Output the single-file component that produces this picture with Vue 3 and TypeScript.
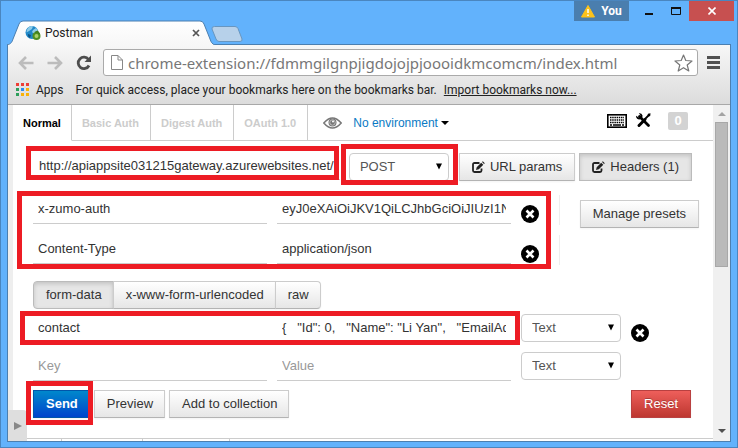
<script setup lang="ts">
import { ref } from 'vue'

interface Pair { key: string; value: string }
interface FormPair extends Pair { type: string; removable: boolean; marked: boolean }

const authTabs: string[] = ['Normal', 'Basic Auth', 'Digest Auth', 'OAuth 1.0']
const activeAuth = ref('Normal')
const address = ref('chrome-extension://fdmmgilgnpjigdojojpjoooidkmcomcm/index.html')
const url = ref('http://apiappsite031215gateway.azurewebsites.net/')
const method = ref('POST')
const headers = ref<Pair[]>([
  { key: 'x-zumo-auth', value: 'eyJ0eXAiOiJKV1QiLCJhbGciOiJIUzI1NiJ9' },
  { key: 'Content-Type', value: 'application/json' },
])
const bodyModes: string[] = ['form-data', 'x-www-form-urlencoded', 'raw']
const bodyMode = ref('form-data')
const formRows = ref<FormPair[]>([
  { key: 'contact', value: '{   "Id": 0,   "Name": "Li Yan",   "EmailAddress"', type: 'Text', removable: true, marked: true },
  { key: '', value: '', type: 'Text', removable: false, marked: false },
])
const appDots: string[] = ['#ee3e36', '#ee3e36', '#ee3e36', '#2e9e5b', '#2b8cf0', '#f9b208', '#2e9e5b', '#f9b208', '#f9b208']
</script>

<template>
  <div class="window">
    <header class="titlebar">
      <div class="tab">
        <svg class="tab-shape" viewBox="0 0 208 25" preserveAspectRatio="none" aria-hidden="true">
          <defs>
            <linearGradient id="tabFill" x1="0" y1="0" x2="0" y2="1">
              <stop offset="0" stop-color="#fff" /><stop offset="1" stop-color="#f7f7f7" />
            </linearGradient>
          </defs>
          <path d="M0 25C4 24 5 22 6 19L12 4Q13 1 16 1H193Q196 1 197 4L203 19C204 22 205 24 208 25Z" fill="url(#tabFill)" />
          <path d="M0 25C4 24 5 22 6 19L12 4Q13 1 16 1H193Q196 1 197 4L203 19C204 22 205 24 208 25" fill="none" stroke="#4b7fb0" />
        </svg>
        <svg class="favicon" viewBox="0 0 16 16" aria-hidden="true">
          <circle cx="7" cy="7.500" r="6.500" fill="#2088c8" />
          <path d="M3 3Q5 .5 8 1.300L7 4 4 6 1.500 7.500Q1.200 5 3 3ZM8 5l3-2 2 2-1 3-3 1-2-2Z" fill="#8ccbe8" />
          <path d="M3 9l3 1-1 3Q2.500 12 3 9Z" fill="#0c5688" />
          <circle cx="11.500" cy="11" r="3" fill="#a9d16a" stroke="#4f8f22" stroke-width="2" />
          <path d="M10 7.500L12.500 6.500 14.500 9" fill="none" stroke="#3f7d1c" stroke-width="1.500" />
        </svg>
        <span class="tab-title">Postman</span>
        <button class="bare tab-close" aria-label="Close tab">
          <svg width="8" height="8" viewBox="0 0 8 8"><path d="M1 1l6 6M7 1L1 7" stroke="#555" stroke-width="1.700" /></svg>
        </button>
      </div>
      <button class="bare new-tab" aria-label="New tab">
        <svg width="32" height="16" viewBox="0 0 32 16"><path d="M3.500 .5H24Q26 .5 27 2.500L31 13Q31.500 15.500 29 15.500H8Q6 15.500 5 13L1 3Q.5 .5 3.500 .5Z" fill="#b7d1ea" stroke="#6896c0" /></svg>
      </button>
      <div class="controls">
        <button class="bare user">
          <svg width="14" height="13" viewBox="0 0 14 13"><path d="M7 .5L13.500 12H.5Z" fill="#fcc21b" stroke="#fcc21b" stroke-linejoin="round" /><path d="M7 4v4M7 9.500v1.500" stroke="#fff" stroke-width="1.500" /></svg>
          <span>You</span>
        </button>
        <button class="bare win" aria-label="Minimize"><svg width="8" height="9" viewBox="0 0 8 9"><path d="M0 7h8" stroke="#111" stroke-width="2" /></svg></button>
        <button class="bare win" aria-label="Maximize"><svg width="10" height="8" viewBox="0 0 10 8"><path d="M.5 1v6.500h9V1" fill="none" stroke="#111" /><path d="M0 1h10" stroke="#111" stroke-width="2" /></svg></button>
        <button class="bare win close" aria-label="Close"><svg width="8" height="8" viewBox="0 0 8 8"><path d="M.5 .5l7 7M7.500 .5l-7 7" stroke="#fff" stroke-width="1.600" /></svg></button>
      </div>
    </header>

    <div class="frame">
      <div class="chrome">
        <div class="toolbar">
          <button class="bare" aria-label="Back"><svg width="16" height="14" viewBox="0 0 16 14"><path d="M8 1L2 7l6 6M2 7h13.500" fill="none" stroke="#bcbcbc" stroke-width="2.600" /></svg></button>
          <button class="bare" aria-label="Forward"><svg width="16" height="14" viewBox="0 0 16 14"><path d="M8 1l6 6-6 6M14 7H.5" fill="none" stroke="#bcbcbc" stroke-width="2.600" /></svg></button>
          <button class="bare" aria-label="Reload"><svg width="16" height="16" viewBox="0 0 16 16"><path d="M12.500 4.500A5.700 5.700 0 1 0 13 10.500" fill="none" stroke="#4d4d4d" stroke-width="2.800" /><path d="M15 .5V7H8.500Z" fill="#4d4d4d" /></svg></button>
          <label class="omnibox">
            <svg width="12" height="15" viewBox="0 0 12 15" aria-hidden="true"><path d="M.5 .5H7L11.500 5V14.500H.5ZM7 .5V5H11.500" fill="#fff" stroke="#888" /></svg>
            <input v-model="address" aria-label="Address" />
            <svg width="19" height="18" viewBox="0 0 19 18" aria-hidden="true"><path d="M9.500 1L11.800 6.500 18 7 13.200 11 14.800 17 9.500 13.700 4.200 17 5.800 11 1 7 7.200 6.500Z" fill="#fff" stroke="#777" stroke-width="1.200" stroke-linejoin="round" /></svg>
          </label>
          <button class="bare menu" aria-label="Menu"><svg width="13" height="13" viewBox="0 0 13 13"><path d="M0 1.500h13M0 6.500h13M0 11.500h13" stroke="#505050" stroke-width="3" /></svg></button>
        </div>
        <div class="bookmarks">
          <svg width="14" height="14" viewBox="0 0 14 14" aria-hidden="true">
            <rect v-for="(c, i) in appDots" :key="i" :x="(i % 3) * 5" :y="Math.floor(i / 3) * 5" width="3" height="3" :fill="c" />
          </svg>
          <span class="apps">Apps</span>
          <span class="hint">For quick access, place your bookmarks here on the bookmarks bar.</span>
          <a href="#">Import bookmarks now...</a>
        </div>
      </div>

      <div class="page">
        <aside class="drawer">
          <button class="bare drawer-toggle" aria-label="Open sidebar"><svg width="8" height="8" viewBox="0 0 8 8"><path d="M0 0L8 4 0 8Z" fill="#888" /></svg></button>
        </aside>
        <main class="content">
          <nav class="auth">
            <button v-for="t in authTabs" :key="t" class="auth-tab" :class="{ active: t === activeAuth }" @click="activeAuth = t">{{ t }}</button>
            <div class="auth-rest">
              <svg width="19" height="12" viewBox="0 0 19 12" aria-hidden="true"><path d="M.8 6Q9.500-4 18.200 6Q9.500 16 .8 6Z" fill="#fff" stroke="#777" stroke-width="1.500" /><circle cx="9.500" cy="5.500" r="4" fill="#777" /><circle cx="9.500" cy="5.500" r="2.700" fill="none" stroke="#ccc" stroke-width=".8" /><circle cx="10" cy="4.500" r="1" fill="#fff" /></svg>
              <a class="env" href="#">No environment<svg width="8" height="4" viewBox="0 0 8 4"><path d="M0 0h8L4 4Z" fill="#000" /></svg></a>
              <div class="app-tools">
                <button class="bare" aria-label="Keyboard shortcuts"><svg width="20" height="14" viewBox="0 0 20 14"><rect x=".8" y=".8" width="18.400" height="12.400" fill="#fff" stroke="#000" stroke-width="1.600" /><path d="M3 3.500h14M3 6h14M3 8.500h14" stroke="#000" stroke-width="1.500" stroke-dasharray="1.500 .7" /><path d="M3 11h2M6 11h8M15 11h2" stroke="#000" stroke-width="1.300" /></svg></button>
                <button class="bare tools" aria-label="Settings"><svg width="15" height="15" viewBox="0 0 15 15"><path d="M3.500 3.500l9 9" stroke="#000" stroke-width="2.800" stroke-linecap="round" /><path d="M.2 2.800L2.600 4.600 4.600 2.600 2.800.2Q5.700-.2 6.500 2.500 6.700 4.500 5.200 5.700 3.200 7.200 1.200 5.800-.2 4.700.2 2.800Z" fill="#000" /><path d="M3 12.500L9 6.500" stroke="#000" stroke-width="3" stroke-linecap="round" /><path d="M8.500 6.500L13.500 1.500" stroke="#000" stroke-width="1.800" /><path d="M12 .7L14.500 .3 14.200 3 12.700 3.500 11.500 2.300Z" fill="#000" /></svg></button>
                <span class="count">0</span>
              </div>
            </div>
          </nav>

          <section class="request">
            <div class="mark mark-url"><input v-model="url" class="field" aria-label="Request URL" /></div>
            <div class="mark mark-method select">
              <select v-model="method" aria-label="Method"><option>GET</option><option>POST</option></select>
              <svg width="6" height="7" viewBox="0 0 6 7" aria-hidden="true"><path d="M0 .5h6L3 6.500Z" fill="#000" /></svg>
            </div>
            <div class="request-actions">
              <button class="btn"><svg width="13" height="12" viewBox="0 0 13 12" aria-hidden="true"><path d="M7.500 2H2.500Q1 2 1 3.500V9.500Q1 11 2.500 11H8Q9.500 11 9.500 9.500V7.500" fill="none" stroke="#222" stroke-width="1.800" /><path d="M4 9L4.700 6.200 9.200 1.700 11.300 3.800 6.800 8.300ZM10 1L10.800 .2 12.800 2.200 12 3Z" fill="#222" /></svg>URL params</button>
              <button class="btn pressed"><svg width="13" height="12" viewBox="0 0 13 12" aria-hidden="true"><path d="M7.500 2H2.500Q1 2 1 3.500V9.500Q1 11 2.500 11H8Q9.500 11 9.500 9.500V7.500" fill="none" stroke="#222" stroke-width="1.800" /><path d="M4 9L4.700 6.200 9.200 1.700 11.300 3.800 6.800 8.300ZM10 1L10.800 .2 12.800 2.200 12 3Z" fill="#222" /></svg>Headers (1)</button>
            </div>
          </section>

          <section class="headers">
            <div class="mark mark-headers">
              <div v-for="(h, i) in headers" :key="i" class="pair">
                <input v-model="h.key" class="field" aria-label="Header" />
                <input v-model="h.value" class="field" aria-label="Header value" />
                <button class="bare remove" aria-label="Remove header"><svg width="18" height="18" viewBox="0 0 18 18"><circle cx="9" cy="9" r="9" fill="#000" /><path d="M5.500 5.500l7 7M12.500 5.500l-7 7" stroke="#fff" stroke-width="2.600" /></svg></button>
              </div>
            </div>
            <div class="presets"><button class="btn">Manage presets</button></div>
          </section>

          <div class="modes" role="group" aria-label="Body type">
            <button v-for="m in bodyModes" :key="m" class="btn" :class="{ pressed: m === bodyMode }" @click="bodyMode = m">{{ m }}</button>
          </div>

          <section class="form">
            <div v-for="(r, i) in formRows" :key="i" class="form-row">
              <div class="pair" :class="{ mark: r.marked, 'mark-pair': r.marked }">
                <input v-model="r.key" class="field" placeholder="Key" aria-label="Key" />
                <input v-model="r.value" class="field" placeholder="Value" aria-label="Value" />
              </div>
              <div class="select">
                <select v-model="r.type" aria-label="Value type"><option>Text</option><option>File</option></select>
                <svg width="6" height="7" viewBox="0 0 6 7" aria-hidden="true"><path d="M0 .5h6L3 6.500Z" fill="#000" /></svg>
              </div>
              <button v-if="r.removable" class="bare remove" aria-label="Remove row"><svg width="18" height="18" viewBox="0 0 18 18"><circle cx="9" cy="9" r="9" fill="#000" /><path d="M5.500 5.500l7 7M12.500 5.500l-7 7" stroke="#fff" stroke-width="2.600" /></svg></button>
            </div>
          </section>

          <footer class="actions">
            <div class="mark mark-send"><button class="btn primary">Send</button></div>
            <button class="btn">Preview</button>
            <button class="btn">Add to collection</button>
            <button class="btn danger">Reset</button>
          </footer>
          <div class="response"><i class="cell first"></i><i class="cell"></i><i class="cell last"></i></div>
        </main>
        <div class="scrollbar" aria-hidden="true">
          <svg width="8" height="4" viewBox="0 0 8 4"><path d="M0 4h8L4 0Z" fill="#a3a3a3" /></svg>
          <div class="thumb"></div>
          <svg width="8" height="4" viewBox="0 0 8 4"><path d="M0 0h8L4 4Z" fill="#505050" /></svg>
        </div>
      </div>
    </div>
  </div>
</template>

<style>
body { background: #62b2fc; }
</style>

<style scoped>
* { box-sizing: border-box; }
.window {
  min-height: 100vh; display: flex; flex-direction: column; background: #62b2fc;
  border: 1px solid #4a86bf; padding-bottom: 5px;
  font: 13px/18px "Liberation Sans", Arial, sans-serif; color: #333;
}
button, input, select { font: inherit; color: inherit; margin: 0; min-width: 0; }
svg { flex: none; display: block; }
.bare { border: 0; padding: 0; background: none; display: flex; align-items: center; justify-content: center; flex: none; }

.titlebar { height: 43px; display: flex; align-items: flex-end; padding: 0 3px 0 6px; font-family: Roboto, "Open Sans", sans-serif; font-size: 12px; }
.tab { position: relative; z-index: 1; width: 208px; height: 25px; margin-bottom: -1px; display: flex; align-items: center; padding: 0 15px 0 18px; color: #222; }
.tab-shape { position: absolute; inset: 0; width: 100%; height: 100%; }
.favicon { position: relative; width: 16px; height: 16px; margin-right: 4px; }
.tab-title { position: relative; flex: 1; }
.tab-close { position: relative; }
.new-tab { margin: 0 0 2px -4px; }
.controls { margin-left: auto; align-self: flex-start; height: 20px; display: flex; }
.user { width: 55px; background: #4a7eae; color: #fff; font-weight: 700; gap: 6px; margin-right: 6px; }
.win { width: 27px; }
.close { width: 45px; background: #c75050; }

.frame { flex: 1; display: flex; flex-direction: column; margin: 0 6px; border: 1px solid #4b7fb0; }
.chrome { background: linear-gradient(#f7f7f7, #dcdcdc); border-bottom: 1px solid #a8a8a8; }
.toolbar { display: flex; align-items: center; padding: 4px 10px 0; gap: 13px; height: 31px; }
.omnibox { flex: 1; display: flex; align-items: center; gap: 5px; height: 27px; border: 1px solid #aaa; border-radius: 3px; background: #fff; padding: 0 4px 0 7px; margin-left: -2px; }
.omnibox input { flex: 1; border: 0; padding: 0; background: none; font-family: "Noto Sans", "Open Sans", sans-serif; font-size: 15px; color: #777; outline: 0; height: 22px; }
.menu { margin-left: -4px; }
.bookmarks { display: flex; align-items: center; height: 28px; padding: 0 8px; font-family: Roboto, "Open Sans", sans-serif; font-size: 12px; color: #222; white-space: nowrap; }
.apps { margin-left: 6px; }
.hint { margin-left: 12px; }
.bookmarks a { margin-left: 7px; color: #222; }

.page { flex: 1; display: flex; background: #fff; }
.drawer { width: 5px; background: #eee; display: flex; align-items: flex-end; }
.drawer-toggle { position: relative; width: 19px; height: 31px; background: #dedede; border-radius: 0 4px 0 0; }
.content { flex: 1; min-width: 0; display: flex; flex-direction: column; }

.auth { display: flex; height: 36px; }
.auth-tab { border: solid #ccc; border-width: 0 1px 1px 0; background: #fff; padding: 0 11px 0 10px; font-size: 11px; font-weight: 700; color: #ccc; }
.auth-tab.active { color: #000; border-bottom-color: #fff; padding-right: 10px; }
.auth-rest { flex: 1; display: flex; align-items: center; padding: 0 25px 0 15px; border-bottom: 1px solid #ccc; }
.env { display: flex; align-items: center; gap: 3px; margin: 0 auto 0 11px; color: #0a7ac4; text-decoration: none; font-size: 12px; }
.app-tools { display: flex; align-items: center; padding-bottom: 4px; }
.tools { margin: 0 17px 0 9px; }
.count { width: 20px; height: 18px; background: #d3d3d3; color: #fff; font-weight: 700; text-align: center; border-radius: 2px; }

.field { border: 0; border-bottom: 1px solid #ccc; background: none; padding: 0 5px 1px; height: 29px; outline: 0; border-radius: 0; flex: 0 1 234px; width: 100%; }
.field::placeholder { color: #999; opacity: 1; }
.btn { height: 28px; border: 1px solid #ccc; border-bottom-color: #b3b3b3; background: linear-gradient(#fff, #e6e6e6); padding: 0 12px; display: flex; align-items: center; gap: 5px; box-shadow: 0 1px 2px rgba(0, 0, 0, .05); white-space: nowrap; border-radius: 0; }
.btn.pressed { background: #e6e6e6; border-color: #bbb; box-shadow: inset 0 2px 4px rgba(0, 0, 0, .15); }
.select { position: relative; width: 100px; height: 28px; flex: none; }
.select select { appearance: none; width: 100%; height: 100%; border: 1px solid #ccc; border-radius: 4px; background: #fff; padding: 0 20px 0 10px; color: #555; }
.select svg { position: absolute; right: 7px; top: 10px; pointer-events: none; }
.remove { width: 18px; height: 18px; }

/* red callout frames laid over the highlighted controls */
.mark { position: relative; }
.mark::after { content: ""; position: absolute; border: 5px solid #ed1c24; pointer-events: none; z-index: 2; }
.mark-url::after { inset: -7px 1px 1px -7px; }
.mark-method::after { inset: -9px -9px -4px -8px; }
.mark-headers::after { inset: -4px 9px 2px -16px; }
.mark-pair::after { inset: -3px -9px -3px -13px; }
.mark-send::after { inset: -9px -3px -7px -7px; }

.request { display: flex; padding: 12px 21px 0 20px; }
.mark-url { flex: 0 1 308px; margin-right: 9px; display: flex; }
.mark-url .field { flex: 1; height: 27px; padding: 0 6px 2px; }
.request-actions { display: flex; gap: 4px; margin-left: 10px; }
.headers { display: flex; padding: 14px 14px 0 20px; }
.mark-headers { flex: 0 1 527px; display: grid; gap: 10px; padding-bottom: 6px; }
.pair { display: flex; gap: 10px; flex: 0 1 478px; }
.mark-headers .pair { border-right: 1px solid #eee; align-items: flex-start; height: 30px; }
.mark-headers .remove { margin-top: 10px; }
.presets { margin: 5px 0 0 20px; }
.modes { display: flex; padding: 10px 20px 0; }
.modes .btn, .actions .btn { padding: 0 11px 0 12px; }
.modes .btn + .btn { margin-left: -1px; }
.modes .btn:first-child { border-radius: 4px 0 0 4px; }
.modes .btn:last-child { border-radius: 0 4px 4px 0; }
.form { display: grid; gap: 10px; padding: 5px 20px 0; }
.form-row { display: flex; gap: 10px; }
.form-row .field { height: 29px; margin-bottom: -1px; }
.form-row .remove { margin: 10px 0 -1px; }
.actions { display: flex; gap: 4px; padding: 10px 22px 0 20px; }
.actions .danger { margin-left: auto; padding: 0 12px; }
.btn.primary { color: #fff; font-weight: 700; background: linear-gradient(#0088cc, #0044cc); border-color: #0055aa; }
.btn.danger { color: #fff; background: linear-gradient(#ee5f5b, #bd362f); border-color: #b94040; text-shadow: 0 -1px 0 rgba(0, 0, 0, .25); }
.response { margin-top: auto; height: 3px; border-top: 1px solid #ccc; display: flex; }
.cell { width: 81px; border-right: 1px solid #ccc; }
.cell.first { width: 49px; }
.cell.last { width: 87px; }

.scrollbar { width: 17px; background: #f0f0f0; display: flex; flex-direction: column; align-items: center; padding: 7px 0 8px; }
.thumb { width: 13px; flex: 0 1 145px; margin: 6px 0 auto; background: #bababa; border: 1px solid #a8a8a8; }
</style>
